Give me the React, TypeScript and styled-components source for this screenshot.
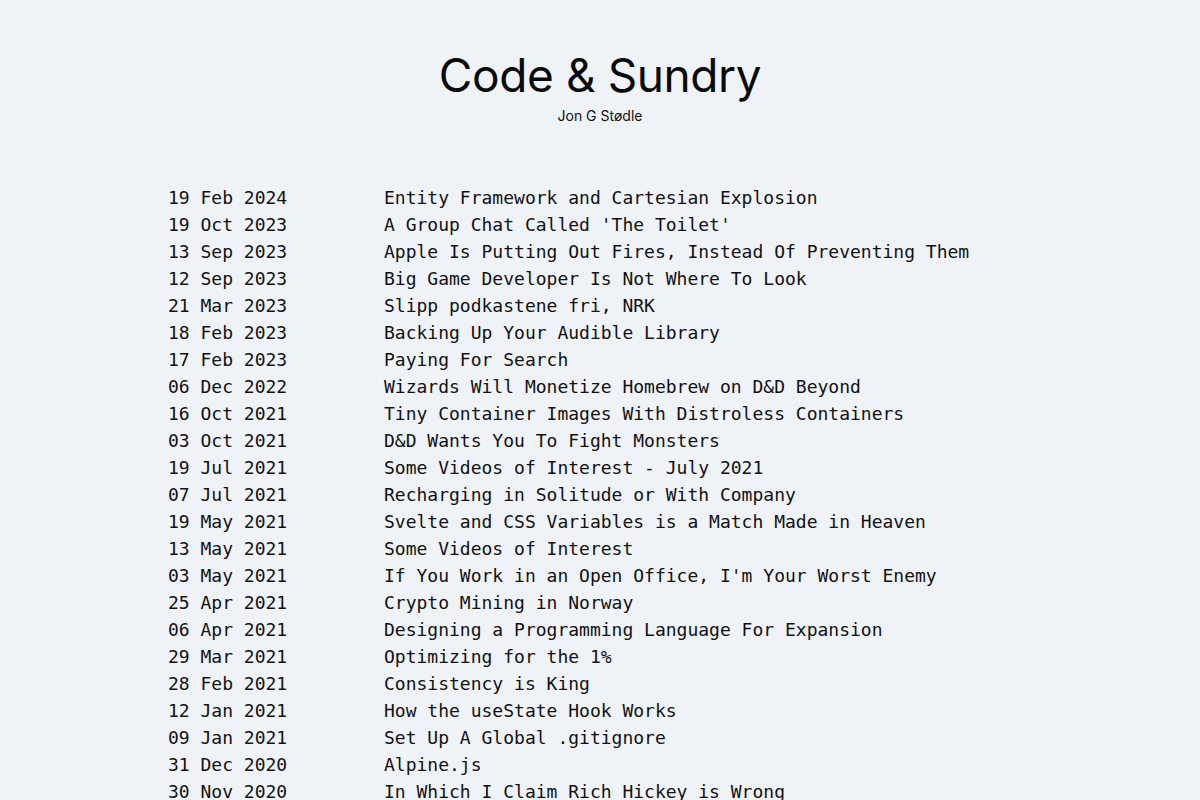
import React from "react";
import styled, { createGlobalStyle } from "styled-components";

const GlobalStyle = createGlobalStyle`
  html, body {
    margin: 0;
    padding: 0;
    background: #eff3f8;
    color: #111;
  }
`;

const Page = styled.div`
  display: flex;
  flex-direction: column;
  align-items: center;
  padding-top: 47px;
`;

const Header = styled.header`
  display: flex;
  flex-direction: column;
  align-items: center;
  gap: 4px;
  font-family: Inter, "Noto Sans", sans-serif;
`;

const Title = styled.h1`
  margin: 0;
  font-size: 46px;
  line-height: 56px;
  font-weight: 400;
  letter-spacing: -0.4px;
  color: #0a0a0a;
`;

const Author = styled.div`
  font-size: 14px;
  line-height: 17px;
  color: #111;
`;

const PostList = styled.ul`
  list-style: none;
  margin: 60px 0 0;
  padding: 0;
  width: 864px;
`;

const PostRow = styled.li`
  display: grid;
  grid-template-columns: 216px 1fr;
  font-family: "DejaVu Sans Mono", monospace;
  font-size: 18px;
  line-height: 27px;
  color: #111;
  white-space: pre;
`;

const PostDate = styled.time``;

const PostTitle = styled.a`
  color: inherit;
  text-decoration: none;
`;

const posts: [string, string][] = [
  ["19 Feb 2024", "Entity Framework and Cartesian Explosion"],
  ["19 Oct 2023", "A Group Chat Called 'The Toilet'"],
  ["13 Sep 2023", "Apple Is Putting Out Fires, Instead Of Preventing Them"],
  ["12 Sep 2023", "Big Game Developer Is Not Where To Look"],
  ["21 Mar 2023", "Slipp podkastene fri, NRK"],
  ["18 Feb 2023", "Backing Up Your Audible Library"],
  ["17 Feb 2023", "Paying For Search"],
  ["06 Dec 2022", "Wizards Will Monetize Homebrew on D&D Beyond"],
  ["16 Oct 2021", "Tiny Container Images With Distroless Containers"],
  ["03 Oct 2021", "D&D Wants You To Fight Monsters"],
  ["19 Jul 2021", "Some Videos of Interest - July 2021"],
  ["07 Jul 2021", "Recharging in Solitude or With Company"],
  ["19 May 2021", "Svelte and CSS Variables is a Match Made in Heaven"],
  ["13 May 2021", "Some Videos of Interest"],
  ["03 May 2021", "If You Work in an Open Office, I'm Your Worst Enemy"],
  ["25 Apr 2021", "Crypto Mining in Norway"],
  ["06 Apr 2021", "Designing a Programming Language For Expansion"],
  ["29 Mar 2021", "Optimizing for the 1%"],
  ["28 Feb 2021", "Consistency is King"],
  ["12 Jan 2021", "How the useState Hook Works"],
  ["09 Jan 2021", "Set Up A Global .gitignore"],
  ["31 Dec 2020", "Alpine.js"],
  ["30 Nov 2020", "In Which I Claim Rich Hickey is Wrong"],
];

export default function App() {
  return (
    <>
      <GlobalStyle />
      <Page>
        <Header>
          <Title>Code &amp; Sundry</Title>
          <Author>Jon G Stødle</Author>
        </Header>
        <PostList>
          {posts.map(([date, title]) => (
            <PostRow key={date + title}>
              <PostDate>{date}</PostDate>
              <PostTitle href="#">{title}</PostTitle>
            </PostRow>
          ))}
        </PostList>
      </Page>
    </>
  );
}
